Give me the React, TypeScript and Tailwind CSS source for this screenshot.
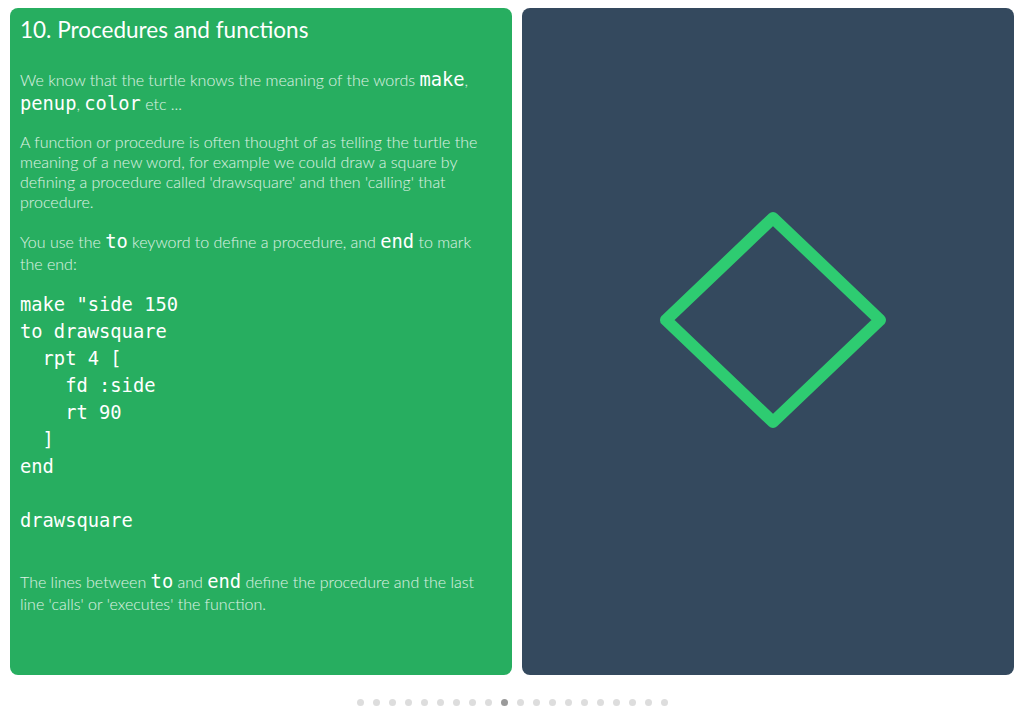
import React from 'react';

const mono = "font-['DejaVu_Sans_Mono',monospace]";

function Code({ children }: { children: React.ReactNode }) {
  return <code className={`${mono} text-[18.75px] text-white font-normal`}>{children}</code>;
}

const codeLines = [
  'make "side 150',
  'to drawsquare',
  '  rpt 4 [',
  '    fd :side',
  '    rt 90',
  '  ]',
  'end',
  '',
  'drawsquare',
];

export default function App() {
  const dots = Array.from({ length: 20 }, (_, i) => i);
  return (
    <div className="w-[1024px] h-[722px] bg-white font-['Lato',sans-serif] flex flex-col">
      <div className="flex gap-[10px] px-[10px] pt-[8px]">
        {/* lesson text */}
        <div className="w-[502px] h-[667px] rounded-[8px] bg-[#27ae60] pl-[10px] pr-[18px] pt-[6px] text-white">
          <h1 className="text-[22.5px] leading-[32px] font-normal">10. Procedures and functions</h1>
          <div className="mt-[22px] text-[16px] leading-[20px] font-light text-white/85">
            <p className="leading-[24px]">
              We know that the turtle knows the meaning of the words <Code>make</Code>, <Code>penup</Code>,{' '}
              <Code>color</Code> etc ...
            </p>
            <p className="mt-[16px]">
              A function or procedure is often thought of as telling the turtle the meaning of a new word, for
              example we could draw a square by defining a procedure called 'drawsquare' and then 'calling' that
              procedure.
            </p>
            <p className="mt-[19px] leading-[22px]">
              You use the <Code>to</Code> keyword to define a procedure, and <Code>end</Code> to mark the end:
            </p>
          </div>
          <pre className={`${mono} mt-[16px] text-[18.75px] leading-[27px] text-white`}>
            {codeLines.map((l, i) => (
              <div key={i} className="h-[27px]">
                {l}
              </div>
            ))}
          </pre>
          <p className="mt-[37px] text-[16px] leading-[22px] font-light text-white/85">
            The lines between <Code>to</Code> and <Code>end</Code> define the procedure and the last line 'calls' or
            'executes' the function.
          </p>
        </div>

        {/* turtle canvas */}
        <div className="w-[492px] h-[667px] rounded-[8px] bg-[#34495e] flex items-center justify-center">
          <svg width="492" height="667" viewBox="0 0 492 667">
            <polygon
              points="251,210 358,312 251,414 144,312"
              fill="none"
              stroke="#2ecc71"
              strokeWidth="12"
              strokeLinejoin="round"
            />
          </svg>
        </div>
      </div>

      <div className="flex justify-center gap-[9px] mt-[24px]">
        {dots.map((i) => (
          <span key={i} className={`w-[7px] h-[7px] rounded-full ${i === 9 ? 'bg-[#9a9a9a]' : 'bg-[#dddddd]'}`} />
        ))}
      </div>
    </div>
  );
}
